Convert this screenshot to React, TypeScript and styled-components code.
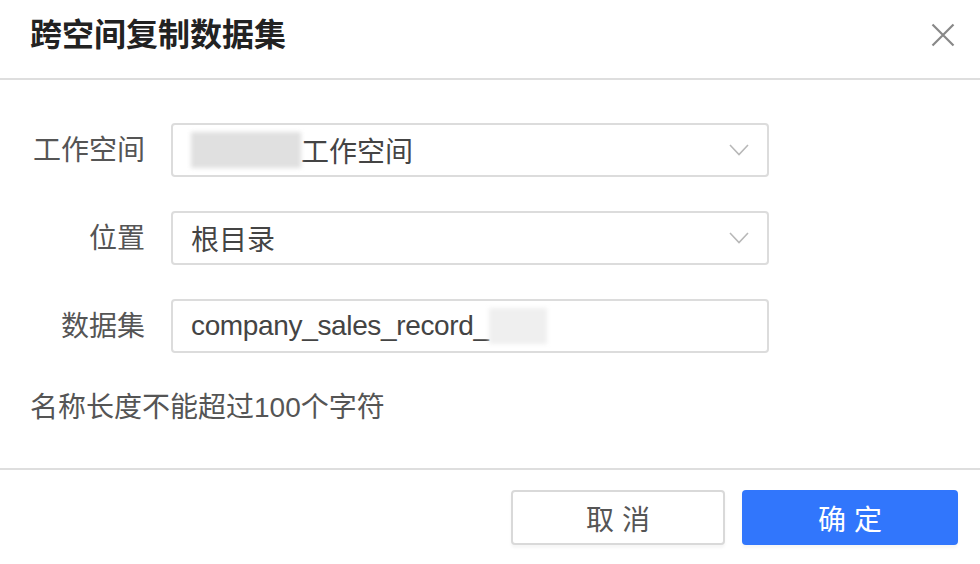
import React from "react";
import styled, { createGlobalStyle } from "styled-components";

const Global = createGlobalStyle`
  html, body { margin: 0; padding: 0; background: #fff; }
  * { box-sizing: border-box; }
  body { font-family: "Liberation Sans", "Noto Sans CJK SC", sans-serif; }
`;

const Dialog = styled.div`
  width: 980px;
  height: 564px;
  display: flex;
  flex-direction: column;
  background: #fff;
`;

const Header = styled.div`
  height: 80px;
  flex: none;
  display: flex;
  align-items: center;
  justify-content: space-between;
  padding: 0 24px 8px 30px;
  border-bottom: 2px solid #dedede;
`;

const Title = styled.h1`
  margin: 0;
  font-size: 32px;
  font-weight: 700;
  color: #222;
  line-height: 40px;
`;

const CloseButton = styled.button`
  width: 26px;
  height: 26px;
  padding: 0;
  border: none;
  background: none;
  display: flex;
  align-items: center;
  justify-content: center;
  cursor: pointer;
`;

const Body = styled.div`
  flex: 1;
  padding: 43px 0 0 30px;
`;

const Form = styled.div`
  display: grid;
  grid-template-columns: 115px 598px;
  column-gap: 26px;
  row-gap: 34px;
  align-items: center;
`;

const Label = styled.label`
  text-align: right;
  font-size: 28px;
  color: #555;
  line-height: 40px;
  padding-top: 2px;
`;

const Field = styled.div`
  height: 54px;
  border: 2px solid #dcdcdc;
  border-radius: 4px;
  display: flex;
  align-items: center;
  padding: 0 18px 0 18px;
  font-size: 28px;
  color: #444;
`;

const Value = styled.span<{ $latin?: boolean }>`
  flex: 1;
  display: flex;
  align-items: center;
  white-space: nowrap;
  letter-spacing: ${(p) => (p.$latin ? "-0.35px" : "0")};
`;

const Redacted = styled.span<{ $w: number; $tone: string }>`
  display: inline-block;
  width: ${(p) => p.$w}px;
  height: 36px;
  background: ${(p) => p.$tone};
  filter: blur(2px);
`;

const Hint = styled.p`
  margin: 35px 0 0;
  font-size: 28px;
  line-height: 40px;
  color: #555;
`;

const Footer = styled.div`
  height: 96px;
  flex: none;
  border-top: 2px solid #dedede;
  display: flex;
  justify-content: flex-end;
  align-items: flex-start;
  gap: 17px;
  padding: 20px 22px 0 0;
`;

const Button = styled.button<{ $primary?: boolean }>`
  width: ${(p) => (p.$primary ? 216 : 214)}px;
  height: 55px;
  border-radius: 4px;
  font-family: "Liberation Sans", "Noto Sans CJK SC", sans-serif;
  font-size: 28px;
  letter-spacing: 8px;
  text-indent: 8px;
  border: ${(p) => (p.$primary ? "none" : "2px solid #d9d9d9")};
  background: ${(p) => (p.$primary ? "#3176fc" : "#fff")};
  color: ${(p) => (p.$primary ? "#fff" : "#555")};
  box-shadow: 0 3px 3px rgba(0, 0, 0, 0.04);
  cursor: pointer;
`;

const Chevron = () => (
  <svg width="20" height="12" viewBox="0 0 20 12">
    <polyline points="1,1 10,10.5 19,1" fill="none" stroke="#b8b8b8" strokeWidth="1.6" />
  </svg>
);

export default function App() {
  return (
    <>
      <Global />
      <Dialog>
        <Header>
          <Title>跨空间复制数据集</Title>
          <CloseButton aria-label="关闭">
            <svg width="24" height="24" viewBox="0 0 24 24">
              <path d="M1.5 1.5 L22.5 22.5 M22.5 1.5 L1.5 22.5" stroke="#888" strokeWidth="2.2" fill="none" />
            </svg>
          </CloseButton>
        </Header>
        <Body>
          <Form>
            <Label>工作空间</Label>
            <Field>
              <Value>
                <Redacted $w={110} $tone="#e0e0e0" />
                工作空间
              </Value>
              <Chevron />
            </Field>
            <Label>位置</Label>
            <Field>
              <Value>根目录</Value>
              <Chevron />
            </Field>
            <Label>数据集</Label>
            <Field>
              <Value $latin>
                company_sales_record_
                <Redacted $w={58} $tone="#efefef" />
              </Value>
            </Field>
          </Form>
          <Hint>名称长度不能超过100个字符</Hint>
        </Body>
        <Footer>
          <Button>取消</Button>
          <Button $primary>确定</Button>
        </Footer>
      </Dialog>
    </>
  );
}
